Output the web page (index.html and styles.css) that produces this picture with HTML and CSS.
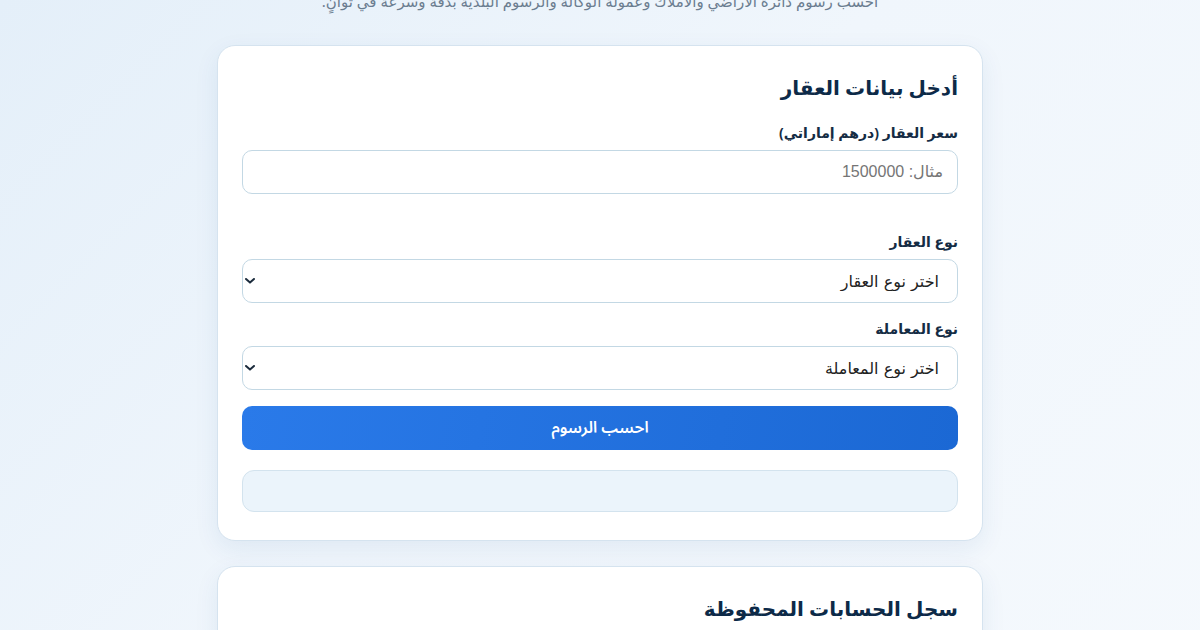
FILE: index.html
```html
<!DOCTYPE html>
<html lang="ar" dir="rtl">
<head>
<meta charset="utf-8">
<title>حاسبة رسوم العقارات</title>
<link rel="stylesheet" href="styles.css">
</head>
<body>
<div class="page">
  <header class="hero">
    <h1 class="hero-title">حاسبة رسوم العقارات في دبي</h1>
    <p class="hero-sub">احسب رسوم دائرة الأراضي والأملاك وعمولة الوكالة والرسوم البلدية بدقة وسرعة في ثوانٍ.</p>
  </header>

  <section class="card">
    <h2 class="card-title">أدخل بيانات العقار</h2>
    <div class="field">
      <label class="label" for="price">سعر العقار (درهم إماراتي)</label>
      <input class="control" id="price" type="text" placeholder="مثال: 1500000">
      <div class="hint"></div>
    </div>
    <div class="field">
      <label class="label" for="ptype">نوع العقار</label>
      <div class="select-wrap">
        <select class="control select" id="ptype"><option>اختر نوع العقار</option></select>
        <svg class="chev" viewBox="0 0 10 6" width="10" height="6"><path d="M1 1l4 3.6L9 1" fill="none" stroke="#1b2b3c" stroke-width="2" stroke-linecap="round" stroke-linejoin="round"/></svg>
      </div>
    </div>
    <div class="field">
      <label class="label" for="ttype">نوع المعاملة</label>
      <div class="select-wrap">
        <select class="control select" id="ttype"><option>اختر نوع المعاملة</option></select>
        <svg class="chev" viewBox="0 0 10 6" width="10" height="6"><path d="M1 1l4 3.6L9 1" fill="none" stroke="#1b2b3c" stroke-width="2" stroke-linecap="round" stroke-linejoin="round"/></svg>
      </div>
    </div>
    <button class="btn" type="button">احسب الرسوم</button>
    <div class="result"></div>
  </section>

  <section class="card">
    <h2 class="card-title">سجل الحسابات المحفوظة</h2>
    <div class="history"></div>
  </section>
</div>
</body>
</html>
```
FILE: styles.css
```css
* { box-sizing: border-box; }
html, body { margin: 0; padding: 0; }
body {
  font-family: "Noto Sans", "DejaVu Sans", sans-serif;
  background: linear-gradient(135deg, #e4eff9 0%, #f0f6fc 45%, #f5f9fd 100%);
  color: #0f2d4a;
  min-height: 630px;
  overflow: hidden;
}
.page {
  width: 766px;
  margin: -53px auto 0;
}
.hero { text-align: center; padding-bottom: 10px; }
.hero-title { margin: 0; font-size: 28px; height: 42px; color: #0f2d4a; }
.hero-sub {
  margin: 0;
  font-size: 15px;
  line-height: 24px;
  color: #6b7d90;
  padding: 0 0 22px;
}
.card {
  background: #fff;
  border: 1px solid #d5e3ef;
  border-radius: 18px;
  padding: 23px 24px 28px;
  margin-bottom: 25px;
  box-shadow: 0 8px 24px rgba(30, 80, 140, 0.08);
}
.card-title {
  margin: 0 0 16px;
  font-size: 20px;
  line-height: 38px;
  font-weight: 700;
  color: #0d2a48;
}
.field { margin-bottom: 16px; }
.label {
  display: block;
  font-size: 14px;
  font-weight: 700;
  line-height: 20px;
  color: #152c44;
  margin-bottom: 7px;
}
.control {
  display: block;
  width: 100%;
  height: 44px;
  border: 1px solid #c3d8e4;
  border-radius: 10px;
  background: #fff;
  padding: 0 14px;
  font-family: "Liberation Sans", "DejaVu Sans", sans-serif;
  font-size: 16px;
  color: #222;
  outline: none;
}
.control::placeholder { color: #757575; }
.hint { height: 22px; }
.select-wrap { position: relative; }
.select {
  appearance: none;
  -webkit-appearance: none;
  font-family: "DejaVu Sans", sans-serif;
  font-size: 16px;
  padding-right: 18px;
  color: #222;
}
.chev { position: absolute; left: 3px; top: 19px; pointer-events: none; }
.btn {
  display: block;
  width: 100%;
  height: 44px;
  border: 0;
  border-radius: 10px;
  background: linear-gradient(100deg, #2a7ae9 0%, #1b68d4 100%);
  color: #fff;
  font-family: "Noto Sans Arabic", "Noto Sans", sans-serif;
  font-size: 16px;
  font-weight: 600;
}
.result {
  margin-top: 20px;
  height: 42px;
  background: #ebf4fb;
  border: 1px solid #d3e3ee;
  border-radius: 12px;
}
.history { height: 60px; }
```
